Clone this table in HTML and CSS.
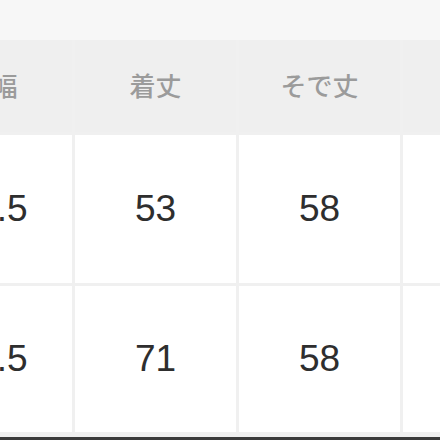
FILE: index.html
```html
<!DOCTYPE html>
<html lang="ja">
<head>
<meta charset="utf-8">
<link rel="stylesheet" href="styles.css">
</head>
<body>
<div class="page">
  <div class="table">
    <div class="cell head">身幅</div>
    <div class="cell head">着丈</div>
    <div class="cell head">そで丈</div>
    <div class="cell head"></div>

    <div class="cell num">48.5</div>
    <div class="cell num">53</div>
    <div class="cell num">58</div>
    <div class="cell num"></div>

    <div class="cell num">48.5</div>
    <div class="cell num">71</div>
    <div class="cell num">58</div>
    <div class="cell num"></div>
  </div>
  <div class="footer-band"></div>
  <div class="footer-edge"></div>
</div>
</body>
</html>
```

FILE: styles.css
```css
html, body {
  margin: 0;
  padding: 0;
  background: #f7f7f7;
  overflow: hidden;
}

.page {
  width: 440px;
  height: 440px;
  padding-top: 40px;
  box-sizing: border-box;
  display: flex;
  flex-direction: column;
  overflow: hidden;
}

.table {
  display: grid;
  grid-template-columns: repeat(4, 161px);
  grid-template-rows: 92px 148px 146px;
  column-gap: 3px;
  row-gap: 3px;
  margin-left: -89px;
  background: #f0f0f0;
  width: max-content;
}

.cell {
  display: flex;
  align-items: center;
  justify-content: center;
}

.head {
  background: #efefef;
  color: #9b9b9b;
  font-family: "Noto Sans CJK JP", "Noto Sans", sans-serif;
  font-size: 26px;
  font-weight: 500;
  padding-bottom: 4px;
  box-sizing: border-box;
}

.num {
  background: #ffffff;
  color: #2e2e2e;
  font-family: "Liberation Sans", Arial, sans-serif;
  font-size: 37px;
}

.footer-band {
  height: 6px;
  background: #efefef;
}

.footer-edge {
  height: 4px;
  background: #3a3a3a;
}
```
